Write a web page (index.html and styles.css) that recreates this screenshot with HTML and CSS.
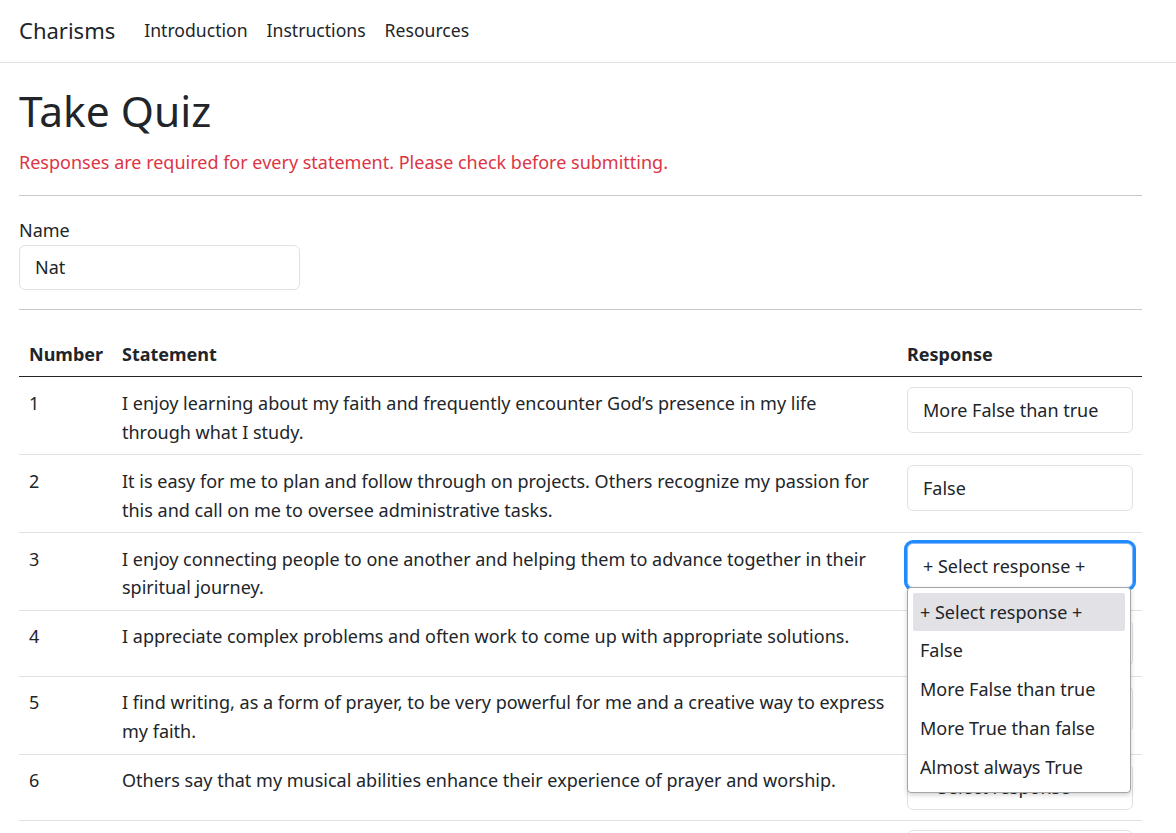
FILE: index.html
```html
<!DOCTYPE html>
<html lang="en">
<head>
<meta charset="utf-8">
<title>Charisms - Take Quiz</title>
<link rel="stylesheet" href="styles.css">
</head>
<body>
<nav class="navbar">
  <a class="brand" href="#">Charisms</a>
  <ul class="nav">
    <li><a href="#">Introduction</a></li>
    <li><a href="#">Instructions</a></li>
    <li><a href="#">Resources</a></li>
  </ul>
</nav>
<main class="container">
  <h1>Take Quiz</h1>
  <p class="error">Responses are required for every statement. Please check before submitting.</p>
  <hr>
  <label class="label" for="name">Name</label>
  <input class="input name" id="name" type="text" value="Nat">
  <hr>
  <table class="table">
    <thead>
      <tr><th class="c-num">Number</th><th class="c-stmt">Statement</th><th class="c-resp">Response</th></tr>
    </thead>
    <tbody>
      <tr><td>1</td><td>I enjoy learning about my faith and frequently encounter God’s presence in my life through what I study.</td><td class="rcell"><div class="input sel">More False than true</div></td></tr>
      <tr><td>2</td><td>It is easy for me to plan and follow through on projects. Others recognize my passion for this and call on me to oversee administrative tasks.</td><td class="rcell"><div class="input sel">False</div></td></tr>
      <tr><td>3</td><td>I enjoy connecting people to one another and helping them to advance together in their spiritual journey.</td><td class="rcell"><div class="anchor"><div class="input sel focus">+ Select response +</div>
        <ul class="popup">
          <li class="hl">+ Select response +</li>
          <li>False</li>
          <li>More False than true</li>
          <li>More True than false</li>
          <li>Almost always True</li>
        </ul></div></td></tr>
      <tr><td>4</td><td>I appreciate complex problems and often work to come up with appropriate solutions.</td><td class="rcell"><div class="input sel">+ Select response +</div></td></tr>
      <tr><td>5</td><td>I find writing, as a form of prayer, to be very powerful for me and a creative way to express my faith.</td><td class="rcell"><div class="input sel">+ Select response +</div></td></tr>
      <tr><td>6</td><td>Others say that my musical abilities enhance their experience of prayer and worship.</td><td class="rcell"><div class="input sel">+ Select response +</div></td></tr>
      <tr class="last"><td></td><td></td><td class="rcell"><div class="input sel"></div></td></tr>
    </tbody>
  </table>
</main>
</body>
</html>
```
FILE: styles.css
```css
* { box-sizing: border-box; }
html, body { margin: 0; }
body {
  font-family: "Noto Sans", "Open Sans", sans-serif;
  font-size: 18px;
  line-height: 29px;
  color: #212529;
  background: #fff;
  overflow: hidden;
}
a { color: inherit; text-decoration: none; }

.navbar {
  height: 63px;
  display: flex;
  align-items: center;
  padding: 0 19px 2px;
  border-bottom: 1px solid #dee2e6;
}
.brand { font-size: 22px; margin-right: 29px; color: #212529; }
.nav { list-style: none; margin: 0; padding: 0; display: flex; gap: 19px; }
.nav a { color: #212529; font-size: 17.6px; }

.container { padding: 19px 34px 0 19px; }
h1 {
  margin: 0 0 7.5px;
  font-size: 42.5px;
  font-weight: 400;
  line-height: 58px;
}
.error { margin: 0 0 18px; color: #dc3545; }
hr { margin: 0 0 19px; border: 0; border-top: 1px solid #c8c9ca; }
.label { display: block; margin-bottom: 0; padding-top: 1px; }
.input {
  display: block;
  height: 45px;
  border: 1px solid #dee2e6;
  border-radius: 6px;
  padding: 7px 15px;
  font: inherit;
  color: #212529;
  background: #fff;
  line-height: 29px;
}
.name { width: 281px; margin-bottom: 19px; outline: none; }

.table { width: 100%; border-collapse: collapse; table-layout: fixed; line-height: 28.8px; }
.c-num { width: 93px; }
.c-resp { width: 245px; }
.table th, .table td {
  text-align: left;
  vertical-align: top;
  padding: 11.6px 10px 7.6px;
}
.table td.rcell { padding: 9.6px 10px; }
.table th { font-weight: 700; border-bottom: 1px solid #212529; }
.table td { border-bottom: 1px solid #dee2e6; }
.sel { width: 226px; height: 45.8px; padding-top: 8px; line-height: 29px; white-space: nowrap; }
.focus {
  border-color: #86b7fe;
  box-shadow: 0 0 0 3px #1f8bff;
}
.anchor { position: relative; }
.popup {
  position: absolute;
  left: 0;
  top: 44px;
  width: 224px;
  margin: 0;
  padding: 5px;
  list-style: none;
  background: #fff;
  border: 1px solid #a5a5a5;
  border-radius: 4px;
  box-shadow: 0 2px 5px rgba(0,0,0,.18);
  z-index: 2;
  line-height: 38px;
}
.popup li {
  height: 38.8px;
  line-height: 38px;
  padding: 0 7px;
  white-space: nowrap;
}
.popup li.hl { background: #e1e1e6; border-radius: 2px; }
```
